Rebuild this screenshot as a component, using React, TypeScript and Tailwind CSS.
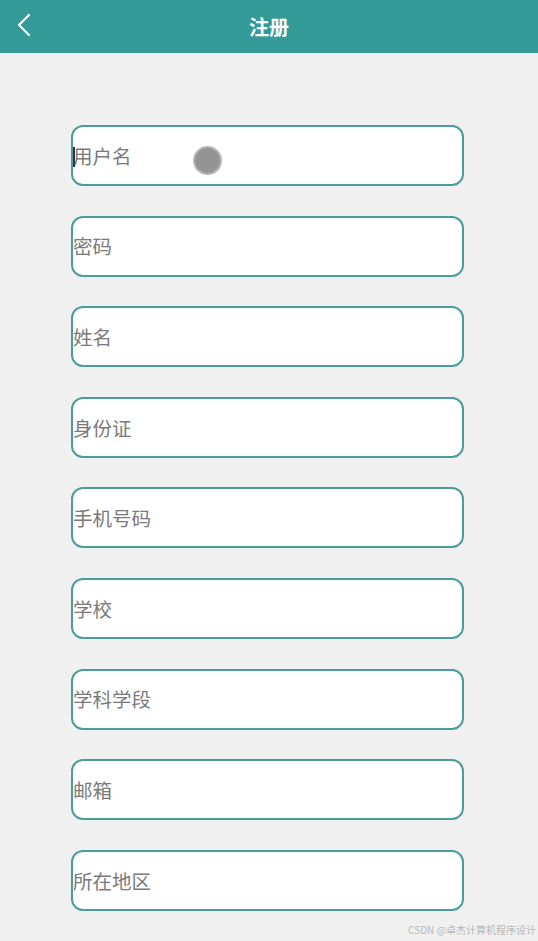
import React from "react";

const fields = ["用户名", "密码", "姓名", "身份证", "手机号码", "学校", "学科学段", "邮箱", "所在地区"];

export default function App() {
  return (
    <div
      className="w-[538px] h-[941px] bg-[#f0f0f0] flex flex-col relative overflow-hidden"
      style={{ fontFamily: '"Microsoft YaHei", "Noto Sans CJK SC", sans-serif' }}
    >
      <div className="h-[53px] bg-[#339a98] flex items-center justify-center relative shrink-0">
        <svg className="absolute left-[15px] top-[13px]" width="18" height="24" viewBox="0 0 18 24" fill="none">
          <path d="M14 2 L4 12 L14 22" stroke="white" strokeWidth="2.2" strokeLinecap="round" strokeLinejoin="round" />
        </svg>
        <span className="text-white text-[20px] font-bold leading-none">注册</span>
      </div>
      <div className="flex flex-col gap-[29.6px] pl-[71px] pt-[72px]">
        {fields.map((f, i) => (
          <div
            key={f}
            className="w-[393px] h-[61px] bg-white border-[2.5px] border-[#4a9d9a] rounded-[12px] flex items-center relative"
          >
            {i === 0 && <span className="absolute left-0 top-[20px] w-[1.5px] h-[20px] bg-[#333]" />}
            <span className="text-[19.5px] text-[#7a7a7a] leading-none">{f}</span>
            {i === 0 && (
              <span className="absolute left-[120px] top-[19px] w-[29px] h-[29px] rounded-full bg-[#949494] border-[2px] border-[#b5b5b5]" />
            )}
          </div>
        ))}
      </div>
      <div className="absolute right-[2px] bottom-[6px] text-[10px] text-[#b8b8b8] leading-none">CSDN @卓杰计算机程序设计</div>
    </div>
  );
}
